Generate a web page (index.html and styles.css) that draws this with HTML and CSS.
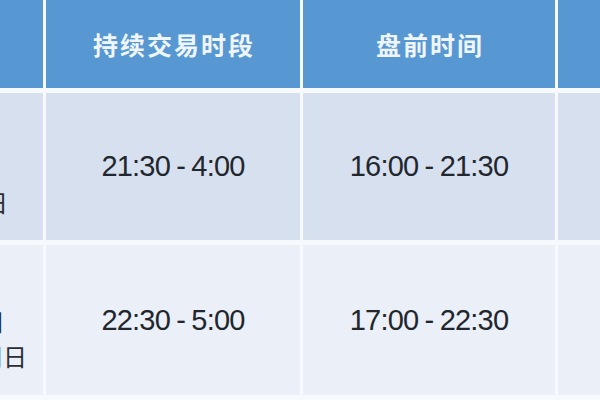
FILE: index.html
```html
<!DOCTYPE html>
<html lang="zh">
<head>
<meta charset="utf-8">
<title>美股交易时间</title>
<link rel="stylesheet" href="styles.css">
</head>
<body>
<div class="table">
  <div class="cell head"></div>
  <div class="cell head">持续交易时段</div>
  <div class="cell head">盘前时间</div>
  <div class="cell head"></div>

  <div class="cell row1 side">
    <div class="ln l1">夏令时</div>
    <div class="ln l2">3月第二个周</div>
    <div class="ln l3">至11月第一个周日</div>
  </div>
  <div class="cell row1 time">21:30 - 4:00</div>
  <div class="cell row1 time">16:00 - 21:30</div>
  <div class="cell row1"></div>

  <div class="cell row2 side">
    <div class="ln l1">冬令时</div>
    <div class="ln l4">11月第一个周日</div>
    <div class="ln l5">至次年3月第二个周日</div>
  </div>
  <div class="cell row2 time">22:30 - 5:00</div>
  <div class="cell row2 time">17:00 - 22:30</div>
  <div class="cell row2"></div>
</div>
</body>
</html>
```
FILE: styles.css
```css
html, body {
  margin: 0;
  padding: 0;
  width: 600px;
  height: 400px;
  overflow: hidden;
  background: #f4f7fb;
}

.table {
  display: grid;
  grid-template-columns: 43px 254px 252px 42px;
  grid-template-rows: 88px 147px 150px;
  column-gap: 3px;
  row-gap: 5px;
  padding-bottom: 5px;
  background: #f6f9fd;
}

.cell {
  display: flex;
  align-items: center;
  justify-content: center;
  overflow: hidden;
}

.head {
  background: #5797d2;
  color: #eef6fc;
  font-family: "Noto Sans CJK SC", "Noto Sans", sans-serif;
  font-weight: 700;
  font-size: 25px;
  letter-spacing: 2px;
  padding-left: 2px;
}

.row1 { background: #d6e0ef; }
.row2 { background: #ebeff7; }

.time {
  color: #22262d;
  font-family: "Liberation Sans", Arial, sans-serif;
  font-size: 29px;
  letter-spacing: -0.8px;
  word-spacing: -1px;
}

.side {
  flex-direction: column;
  align-items: flex-end;
  color: #2a2e36;
  font-family: "Noto Sans CJK SC", sans-serif;
  font-size: 24px;
  line-height: 35px;
}

.ln { white-space: nowrap; }
.l1 { margin-right: 80px; }
.l2 { margin-right: 42px; }
.l3 { margin-right: 35px; }
.l4 { margin-right: 38px; }
.l5 { margin-right: 16px; }
```
